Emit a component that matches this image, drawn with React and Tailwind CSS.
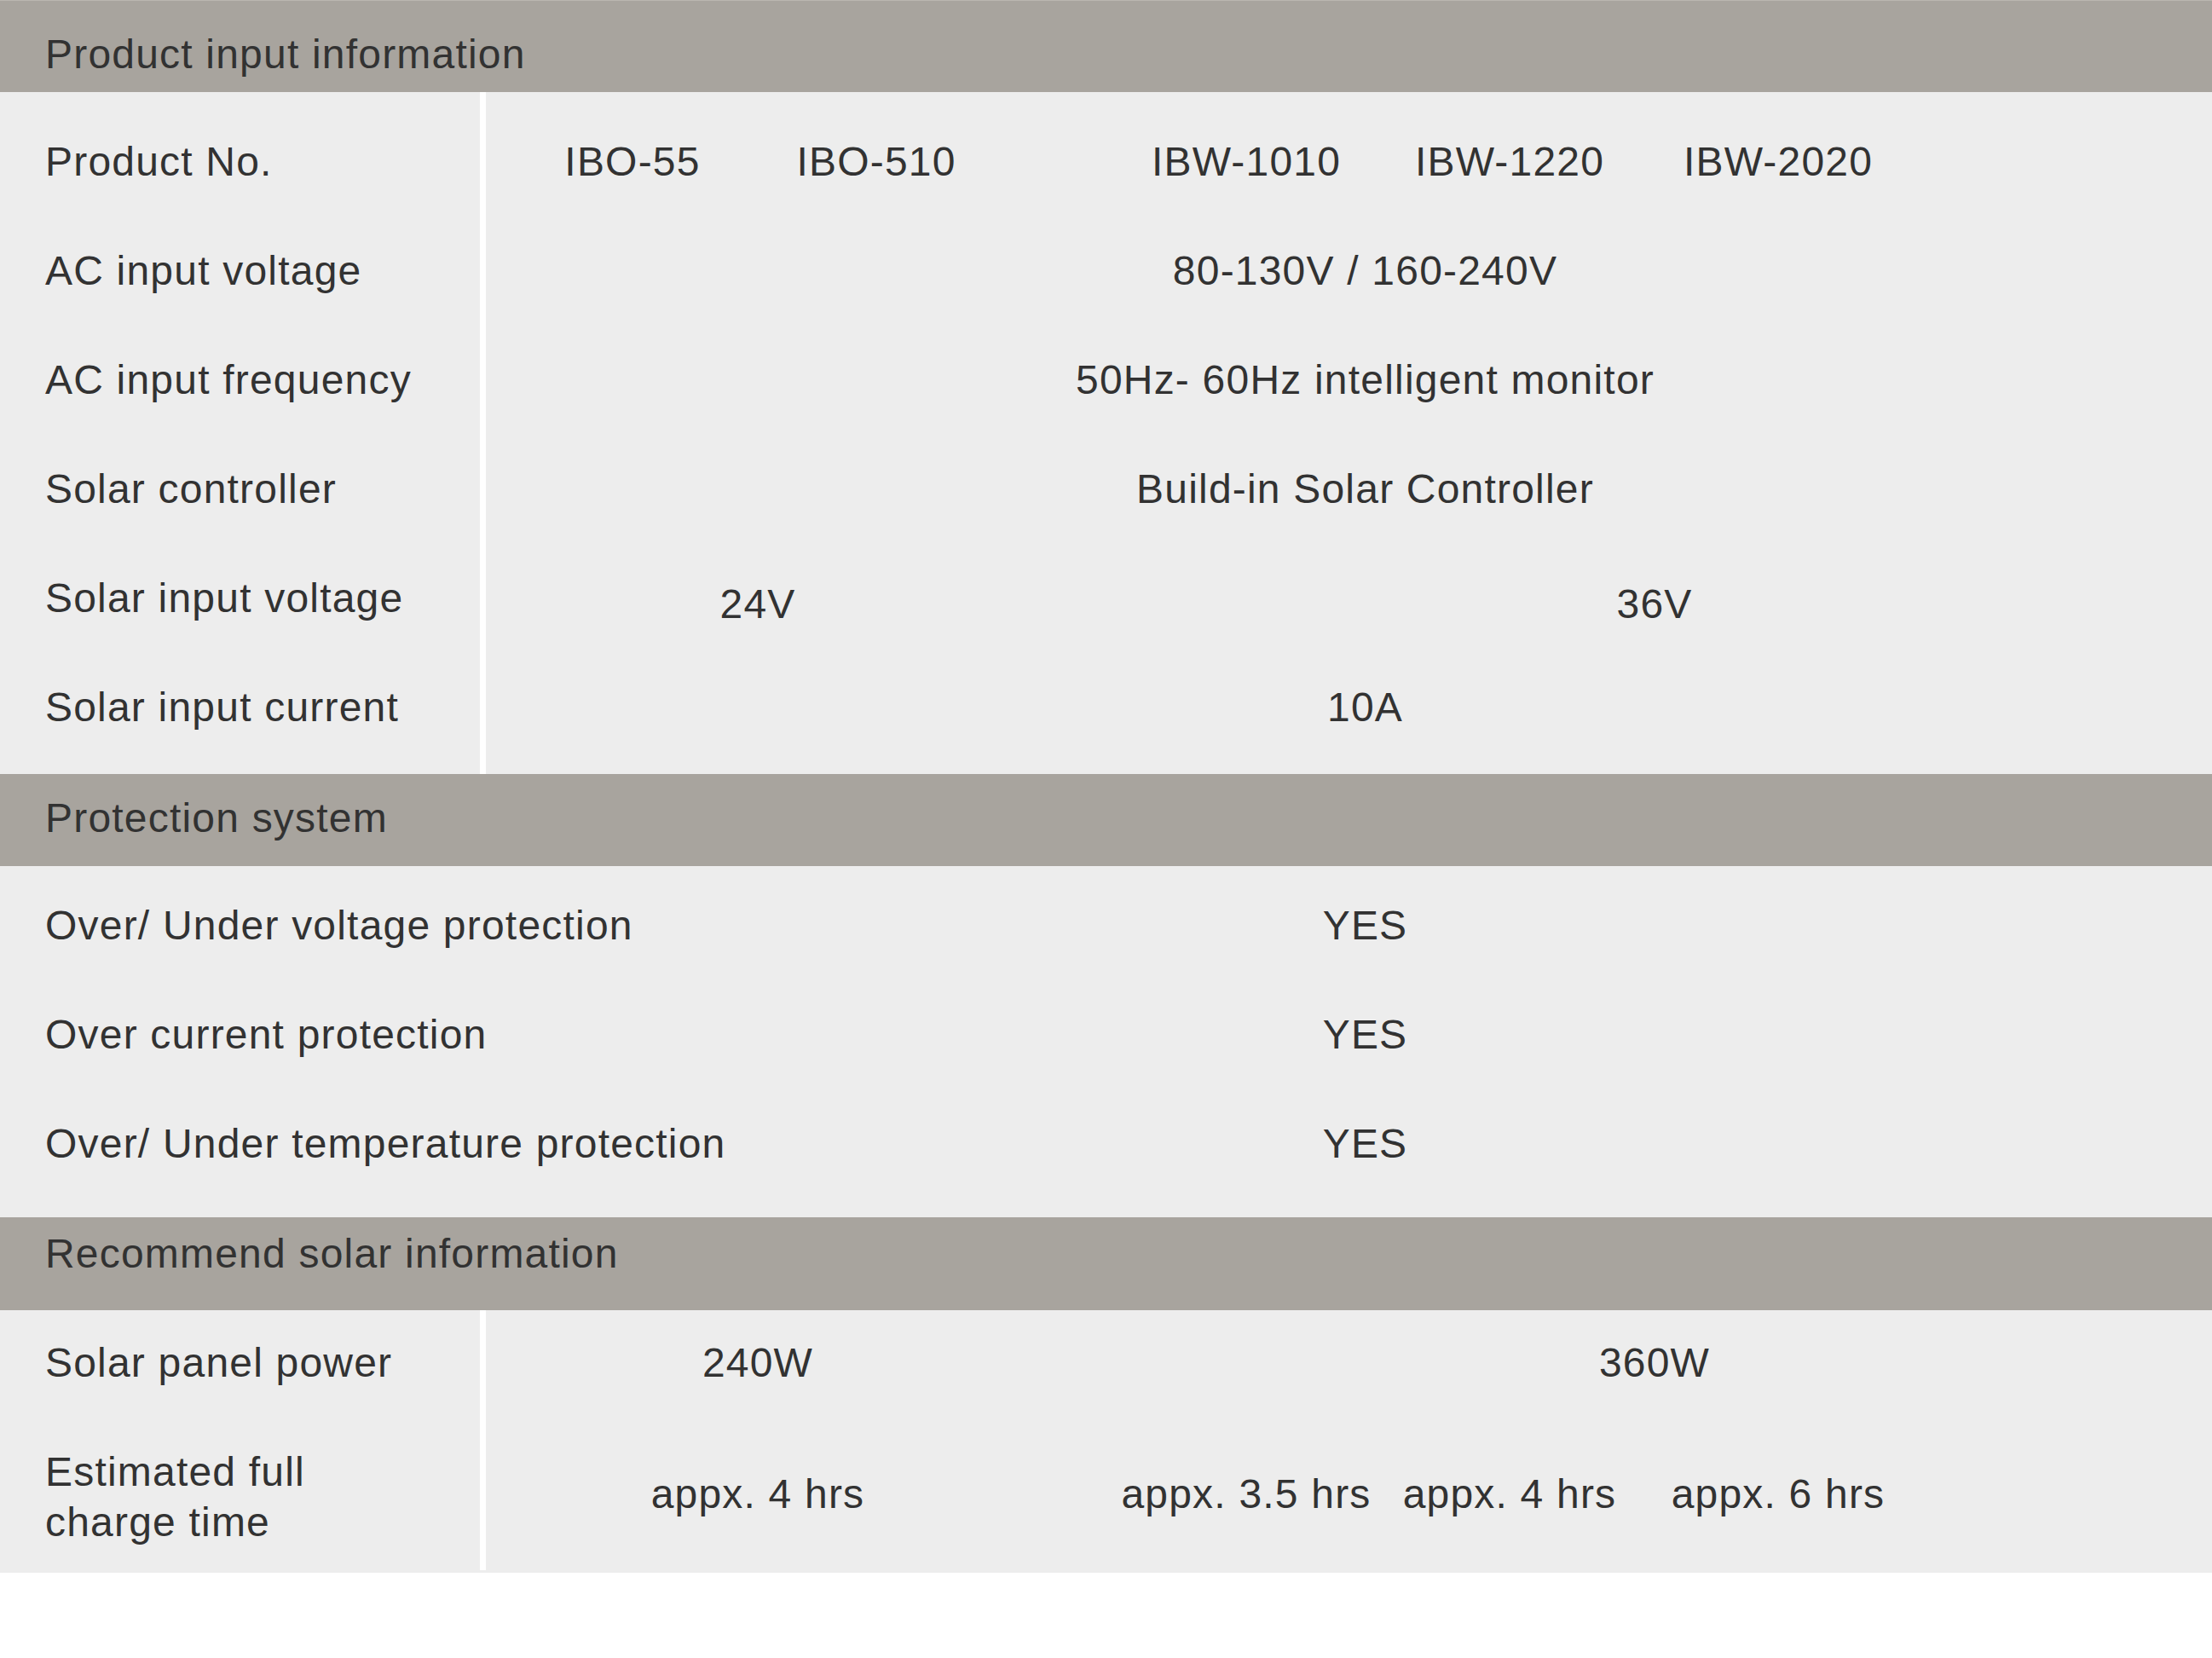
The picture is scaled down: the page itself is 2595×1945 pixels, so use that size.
const HEAD = "h-[108px] bg-[#a8a49e] pl-[53px] leading-[56px] whitespace-nowrap";
const VGRID = "grid grid-cols-[344px_228px_66px_79px_350px_268px_362px_1fr] items-center";

function LabelCell({ children }) {
  return <div className="h-[128px] flex items-center pl-[53px] whitespace-nowrap">{children}</div>;
}

export default function App() {
  return (
    <div className="w-[2595px] h-[1945px] bg-white font-['Liberation_Sans',Arial,sans-serif] text-[48px] tracking-[1.2px] text-[#323232] leading-[56px]">
      {/* Section 1 */}
      <div className={`${HEAD} pt-[35px] border-t border-[#bab6b0]`}>Product input information</div>
      <div className="flex bg-[#ededed]">
        <div className="w-[563px] shrink-0 pt-[18px] pb-[14px]">
          <LabelCell>Product No.</LabelCell>
          <LabelCell>AC input voltage</LabelCell>
          <LabelCell>AC input frequency</LabelCell>
          <LabelCell>Solar controller</LabelCell>
          <LabelCell>Solar input voltage</LabelCell>
          <LabelCell>Solar input current</LabelCell>
        </div>
        <div className="w-[7px] shrink-0 bg-white" />
        <div className="flex-1 pt-[18px] pb-[14px] whitespace-nowrap">
          <div className={`${VGRID} h-[128px] text-center`}>
            <div>IBO-55</div>
            <div>IBO-510</div>
            <div className="col-span-2" />
            <div>IBW-1010</div>
            <div>IBW-1220</div>
            <div>IBW-2020</div>
            <div />
          </div>
          <div className="h-[128px] flex items-center justify-center pl-[38px]">80-130V / 160-240V</div>
          <div className="h-[128px] flex items-center justify-center pl-[38px]">50Hz- 60Hz intelligent monitor</div>
          <div className="h-[128px] flex items-center justify-center pl-[38px]">Build-in Solar Controller</div>
          <div className={`${VGRID} h-[128px] text-center pt-[14px]`}>
            <div className="col-span-3">24V</div>
            <div />
            <div className="col-span-4">36V</div>
          </div>
          <div className="h-[128px] flex items-center justify-center pl-[38px]">10A</div>
        </div>
      </div>

      {/* Section 2 */}
      <div className={`${HEAD} pt-[24px]`}>Protection system</div>
      <div className="bg-[#ededed] pt-[6px] pb-[22px] whitespace-nowrap">
        {["Over/ Under voltage protection", "Over current protection", "Over/ Under temperature protection"].map((t) => (
          <div key={t} className="grid grid-cols-[570px_1fr] h-[128px] items-center">
            <div className="pl-[53px] overflow-visible">{t}</div>
            <div className="text-center pl-[38px]">YES</div>
          </div>
        ))}
      </div>

      {/* Section 3 */}
      <div className={`${HEAD} h-[109px] pt-[15px]`}>Recommend solar information</div>
      <div className="flex bg-[#ededed] h-[308px]">
        <div className="w-[563px] shrink-0">
          <div className="h-[123px] flex items-center pl-[53px] whitespace-nowrap">Solar panel power</div>
          <div className="h-[185px] flex items-center pl-[53px] pt-[7px] leading-[59px]">
            <div>Estimated full<br />charge time</div>
          </div>
        </div>
        <div className="w-[7px] shrink-0 bg-white h-[305px]" />
        <div className="flex-1 whitespace-nowrap">
          <div className={`${VGRID} h-[123px] text-center`}>
            <div className="col-span-3">240W</div>
            <div />
            <div className="col-span-4">360W</div>
          </div>
          <div className={`${VGRID} h-[185px] text-center`}>
            <div className="col-span-3">appx. 4 hrs</div>
            <div />
            <div>appx. 3.5 hrs</div>
            <div>appx. 4 hrs</div>
            <div>appx. 6 hrs</div>
            <div />
          </div>
        </div>
      </div>
    </div>
  );
}
